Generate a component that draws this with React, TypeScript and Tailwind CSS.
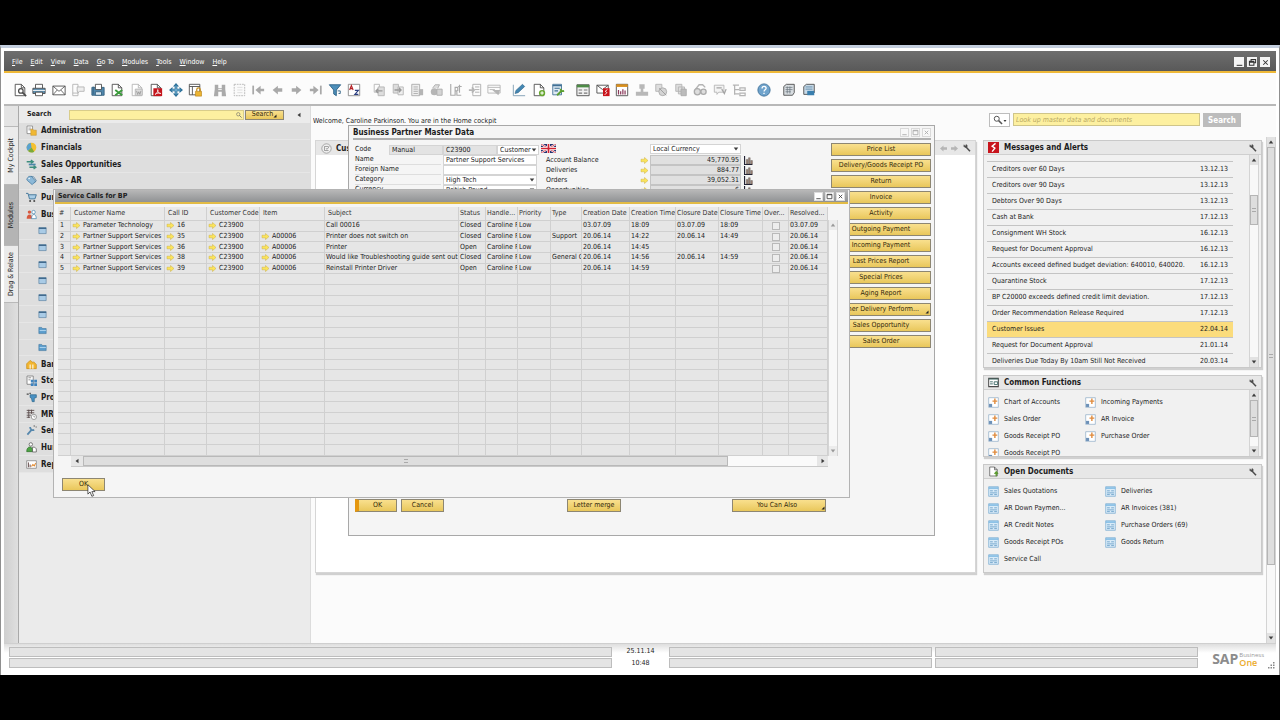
import clsx from 'clsx';
import React, { useState } from 'react';

type Glyph = { name: string; art: React.ReactNode };

const blue = '#3f83b0';
const dark = '#4a4a4a';
const dim = '#b4b4b4';

function Svg({ children, className = 'size-3.5' }: { children: React.ReactNode; className?: string }) {
  return (
    <svg viewBox="0 0 16 16" fill="none" className={clsx('shrink-0', className)} aria-hidden="true">
      {children}
    </svg>
  );
}

const page = (stroke: string, fill = '#fff') => <path d="M2.5 1.5h7l4 4v9h-11zM9.5 1.5v4h4" stroke={stroke} fill={fill} />;

const fileTools: Glyph[] = [
  { name: 'Preview', art: <>{page(dark)}<circle cx="9" cy="9" r="2.6" stroke={dark} strokeWidth="1.4" fill="#fff" /><path d="M11 11l4 4" stroke={dark} strokeWidth="1.8" /></> },
  { name: 'Print', art: <><path d="M4 6V1.5h8V6" stroke={dark} fill="#fff" /><path d="M1 6h14v6H1z" fill="#5d8fb0" stroke={dark} /><path d="M1 8.5h14" stroke="#fff" /><path d="M4 10.5h8v4H4z" fill="#fff" stroke={dark} /></> },
  { name: 'E-mail', art: <><path d="M1 3.5h14v10H1z" fill="#fff" stroke={dark} /><path d="M1 3.5l7 6 7-6M1 13.5l5-5.5M15 13.5L10 8" stroke={dark} strokeWidth=".9" /></> },
  { name: 'SMS', art: <><path d="M2 1.5h6v13H2zM2 11.5h6" stroke={dim} /><path d="M7 4.500h8v5h-5l-2 2v-2H7z" fill="#eee" stroke={dim} /></> },
  { name: 'Fax', art: <><path d="M1 5h14v9H1z" fill="#4f87ad" stroke="#35607e" /><path d="M5 1.500h7v6H5z" fill="#fff" stroke={dark} /><path d="M5 10h7v4H5zM2.500 4v9" fill="#dce9f2" stroke="#35607e" /></> },
  { name: 'Export to Excel', art: <>{page(dark)}<path d="M6 8l8 6M14 8l-8 6" stroke="#3b9b3b" strokeWidth="2.200" /></> },
  { name: 'Export to Word', art: <>{page(dim)}<path d="M6 7h8v7H6z" fill="#ddd" stroke={dim} /><path d="M7.500 9l1.200 4L10 10l1.300 3 1.200-4" stroke="#999" /></> },
  { name: 'Export to PDF', art: <>{page(dark)}<path d="M5 6h10v9H5z" fill="#c4151c" /><path d="M7 13c3-2 3.500-4 3-5.500C9.500 10 11 12 13.500 12c-2-1-4.500-.5-6.500 1z" stroke="#fff" strokeWidth=".9" /></> },
  { name: 'Launch Application', art: <><path d="M8 3v10M3 8h10" stroke="#2c7099" strokeWidth="3" /><path d="M8 0l3.500 4h-7zM8 16l3.500-4h-7zM0 8l4-3.500v7zM16 8l-4-3.500v7z" fill="#2c7099" /><path d="M8 3v10M3 8h10" stroke="#8cc4e3" /></> },
  { name: 'Lock Screen', art: <><path d="M1.500 1.500h12v12h-12zM1.500 4h12M5 4v9.500" stroke={dark} fill="#fff" /><path d="M10 9.500V7.500a2 2 0 014 0v2" stroke="#c48d1e" strokeWidth="1.400" /><path d="M8.500 9.500h7v5.500h-7z" fill="#ecb431" stroke="#b57f16" strokeWidth=".7" /></> },
];

const dataTools: Glyph[] = [
  { name: 'Find', art: <><path d="M2 2h4v4h4V2h4v5l1 8h-5v-5H6v5H1l1-8z" fill="#aaa" /><path d="M6 7.500h4" stroke="#fff" /></> },
  { name: 'Add', art: <><path d="M2.500 1.500h12v13h-12z" stroke={dim} strokeDasharray="2 1" fill="#fafafa" /><path d="M6 5h6M6 8h6M6 11h6" stroke="#ddd" /></> },
  { name: 'First Record', art: <><path d="M2.500 3v10" stroke="#a9a9a9" strokeWidth="2" /><path d="M15 6.500h-4V3L5 8l6 5V9.500h4z" fill="#a9a9a9" /></> },
  { name: 'Previous Record', art: <path d="M14 6H9V3L3 8l6 5v-3h5z" fill="#a9a9a9" /> },
  { name: 'Next Record', art: <path d="M2 6h5V3l6 5-6 5v-3H2z" fill="#a9a9a9" /> },
  { name: 'Last Record', art: <><path d="M13.500 3v10" stroke="#a9a9a9" strokeWidth="2" /><path d="M1 6.500h4V3l6 5-6 5V9.500H1z" fill="#a9a9a9" /></> },
  { name: 'Filter Table', art: <><path d="M1.500 2h13L9.500 8v6.500l-3-2V8z" fill="#4d8fba" stroke="#2a5f84" /><path d="M11 9h3v3h-2" stroke="#2a5f84" /></> },
  { name: 'Sort Table', art: <><path d="M1.500 1.500h13v13h-13z" stroke="#888" fill="#fff" /><path d="M3 8l2-5 2 5M3.700 6.500h2.600" stroke="#b52025" strokeWidth="1.300" /><path d="M9 8.500h4L9 13h4" stroke="#2b3f80" strokeWidth="1.300" /></> },
];

const docTools: Glyph[] = [
  { name: 'Base Document', art: <><path d="M2.500 1.500h6v9h-6z" stroke={dim} /><path d="M7 4.500h7v10H7z" fill="#ddd" stroke={dim} /><path d="M12 9H4M7 6.500L4.500 9 7 11.500" stroke="#999" strokeWidth="1.500" /></> },
  { name: 'Target Document', art: <><path d="M2.500 1.500h6v10h-6z" stroke={dim} fill="#ddd" /><path d="M8 4.500h6v9H8z" stroke={dim} fill="#eee" /><path d="M4 8h7M9 5.500L11.500 8 9 10.500" stroke="#999" strokeWidth="1.500" /></> },
  { name: 'Gross Profit', art: <><path d="M2 1.500h9v13H2zM4 4.500h5M4 7h5M4 9.500h5M4 12h5" stroke="#aaa" fill="#eee" /><path d="M10 7h5v7h-5z" fill="#b5b5b5" /></> },
  { name: 'Payment Means', art: <><path d="M4 6l3-4h5l-2 4" stroke="#aaa" fill="#ddd" /><circle cx="6" cy="10" r="4" fill="#b5b5b5" /><path d="M9 7h6v7H9z" fill="#d4d4d4" stroke="#aaa" /></> },
  { name: 'Volume and Weight', art: <path d="M2 1v13h5V9h2v5h5M7 9V5h3v4M12 2v9M10.500 4h4" stroke="#aaa" strokeWidth="1.300" /> },
  { name: 'Transaction Journal', art: <><path d="M5.500 1.500h9v13h-9zM8 4.500h5M8 7.500h5M8 10.500h5" stroke="#aaa" /><path d="M1 8h6M4.500 5L7 8l-2.500 3" stroke="#b5b5b5" strokeWidth="2" /></> },
  { name: 'Layout Designer', art: <><path d="M1 2.500h14v9H1zM1 5h14M3 7.500h6" stroke={dim} /><path d="M6 8l7 6 2-6z" fill="#b5b5b5" /></> },
];

const editTools: Glyph[] = [
  { name: 'Edit', art: <><path d="M1.500 2v12.500H15" stroke="#7a9ab0" /><path d="M3.500 12l1-3.500L12 1.500 14.500 4 7 11z" fill="#4487b3" stroke="#2d6388" strokeWidth=".7" /></> },
  { name: 'New Activity', art: <>{page(dark)}<circle cx="11.500" cy="11.500" r="3.600" fill="#67a82f" /><path d="M11.500 9.500v4M9.500 11.500h4" stroke="#fff" strokeWidth="1.200" /></> },
  { name: 'Form Settings', art: <><path d="M2 1.500h10v12H2z" fill="#dfeaf3" stroke="#3f6f95" /><path d="M2 3h10M4 6h6M4 9h4" stroke="#3f6f95" strokeWidth="1.400" /><path d="M7 14l5-5M11 6.500c0 3 2 3 4 2.500" stroke="#5a9f2e" strokeWidth="2.200" /></> },
];

const reportTools: Glyph[] = [
  { name: 'Query Manager', art: <><path d="M1 2h14v12.500H1z" fill="#f2f2f2" stroke={dark} /><path d="M1 3.500h14" stroke="#4d8b46" strokeWidth="3" /><path d="M3 8h4M9 8h4M3 11.500h4M9 11.500h4" stroke="#777" strokeWidth="1.300" /></> },
  { name: 'Messages', art: <><path d="M1 2.500h13v9H1zM1 2.500l6.500 5 6.500-5" stroke={dark} fill="#fff" /><path d="M8 6h7.500v9H8z" fill="#c9141b" /><path d="M13 7.500l-2.500 2 2 1.500-2.500 2.500" stroke="#fff" /></> },
  { name: 'Calendar', art: <><path d="M1.500 1.500h13v13h-13z" fill="#fff" stroke={dark} /><path d="M1.500 3h13" stroke="#d98f1d" strokeWidth="3" /><path d="M4 13V8M6.500 13V9.500M9 13V7M11.500 13V8.500" stroke="#8b3a5b" strokeWidth="1.400" /></> },
  { name: 'Org Chart', art: <path d="M5 1.500h6v5H9.500V10H15v4.500H1V10h5.500V6.500H5z" fill="#b8b8b8" /> },
  { name: 'Copy', art: <><path d="M2 1.500h7v8H2z" fill="#ddd" stroke={dim} /><circle cx="10" cy="10" r="4.500" fill="#d4d4d4" stroke="#aaa" /><path d="M6 6l8 8" stroke="#999" /></> },
  { name: 'Paste', art: <><path d="M2 1.500h7v8H2zM5 4.500h7v8H5z" fill="#ddd" stroke={dim} /><path d="M8 7h6v7.500H8z" fill="#bbb" stroke="#aaa" /></> },
  { name: 'Find Again', art: <><path d="M3 7l4-5h4l3 3" stroke={dim} strokeWidth="1.600" /><circle cx="5" cy="10" r="3.500" stroke="#aaa" strokeWidth="1.500" fill="#ddd" /><circle cx="12" cy="10" r="3" stroke="#aaa" strokeWidth="1.500" fill="#ddd" /></> },
  { name: 'Alerts', art: <><path d="M1.500 2.500h11v8h-6l-2 2.500v-2.500h-3z" stroke={dim} fill="#f3f3f3" /><path d="M4 5.500h6M10 7l3 5 2-5" stroke="#a5a5a5" strokeWidth="1.500" /></> },
  { name: 'Structure', art: <path d="M1 2.500h7M3 2.500v11M3 7.500h5M9 5.500h6v3H9zM3 12.500h5M9 11.500h6v3H9z" stroke={dim} strokeWidth="1.400" /> },
];

const helpTools: Glyph[] = [
  { name: 'Help', art: <><circle cx="8" cy="8" r="7" fill="#6fa3cc" stroke="#3b6f98" /><path d="M5.800 6.200c0-3 4.600-3 4.600-.2 0 1.800-2.300 1.700-2.300 3.700M8 11v1.600" stroke="#fff" strokeWidth="1.500" /></> },
];

const addonTools: Glyph[] = [
  { name: 'Keyboard', art: <><path d="M2 4l3-2.500h9V11l-2 3H2z" fill="#d8dde1" stroke={dark} /><path d="M4 5h8M4 7.500h8M4 10h6M6 4v8M9 4v8" stroke="#68737c" strokeWidth=".8" /></> },
  { name: 'Workbench', art: <><path d="M2 4l3-2.500h9V11l-2 2H2z" fill="#c8dae8" stroke={dark} /><path d="M4 4.500h8M4 7h8" stroke="#5d87a6" /><path d="M6 9h8v5H6z" fill="#397fae" /></> },
];

function ToolGroup({ glyphs, className }: { glyphs: Glyph[]; className?: string }) {
  return (
    <div className={clsx('flex items-center justify-between', className)}>
      {glyphs.map((g) => (
        <button key={g.name} type="button" title={g.name} aria-label={g.name}>
          <Svg>{g.art}</Svg>
        </button>
      ))}
    </div>
  );
}

const menus = ['File', 'Edit', 'View', 'Data', 'Go To', 'Modules', 'Tools', 'Window', 'Help'];

const windowIcon = (
  <>
    <path d="M1.500 3h13v10.500h-13z" fill="#a9cbe6" stroke="#4a7396" />
    <path d="M1.500 4h13" stroke="#3a6387" strokeWidth="2.400" />
  </>
);
const folderIcon = (
  <>
    <path d="M1.500 13.500v-11h5l1.500 2h6.500v9z" fill="#5a9ccc" stroke="#3f749c" />
    <path d="M3 8h11" stroke="#a8d0ec" strokeWidth="2" />
  </>
);

type ModuleRow = { label?: string; art: React.ReactNode };

const modules: ModuleRow[] = [
  { label: 'Administration', art: <><path d="M1.500 1.500h8v11h-8zM3.500 4.500h4M3.500 7h4" stroke="#777" fill="#fff" /><path d="M7 6h3l1 1.500h4V15H7z" fill="#f0b833" stroke="#c48d1e" strokeWidth=".7" /></> },
  { label: 'Financials', art: <><circle cx="8" cy="8" r="7" fill="#f4c02f" /><path d="M8 8L7 1a7 7 0 00-4 12z" fill="#5aa2cf" /><path d="M8 8l-5 5a7 7 0 009 1z" fill="#7aaa3a" /></> },
  { label: 'Sales Opportunities', art: <><path d="M1 4h9M7 1.500L10.500 4 7 6.500M5 12h9M11 9.500l3.500 2.500-3.500 2.500" stroke="#3d8d7d" strokeWidth="2" /><path d="M4 8h10" stroke="#4c86a8" strokeWidth="2.500" /></> },
  { label: 'Sales - AR', art: <><path d="M1 6l3-4h4l6 7-5 5-7-6z" fill="#8db9d8" stroke="#3e759c" /><path d="M7 2l4 .5 4 5.500-3 4" stroke="#3e759c" /><circle cx="4.500" cy="5" r="1" fill="#fff" /></> },
  { label: 'Purchasing', art: <><path d="M0 2h3l2 8h8l2-6H4" fill="#a9cde6" stroke="#3f7396" strokeWidth="1.300" /><circle cx="6" cy="13" r="1.500" fill={dark} /><circle cx="12" cy="13" r="1.500" fill={dark} /></> },
  { label: 'Business', art: <><circle cx="5" cy="4.500" r="2.500" fill="#d7593f" /><path d="M1 14c0-8 8-8 8 0z" fill="#d7593f" /><circle cx="11" cy="4.500" r="2.500" fill="#fff" stroke={blue} /><path d="M8 14c0-8 7-8 7 0z" fill="#fff" stroke={blue} /></> },
  { art: windowIcon },
  { art: windowIcon },
  { art: windowIcon },
  { art: windowIcon },
  { art: windowIcon },
  { art: windowIcon },
  { art: folderIcon },
  { art: folderIcon },
  { label: 'Banking', art: <><path d="M1 7l5-5 4 3 1-1 4 4v6H1z" fill="#f2b631" stroke="#c98a12" /><path d="M6 14V8M10 14V8" stroke="#fff" strokeWidth="1.500" /></> },
  { label: 'Stock', art: <><path d="M1.500 1.500h9v12h-9zM3.500 4h4M3.500 7h3" stroke="#666" fill="#fff" /><path d="M7 7h4v4H7zM12 7h4v4h-4zM7 12h4v4H7zM12 12h4v4h-4z" fill="#3f83bd" /></> },
  { label: 'Production', art: <><path d="M1 3h3M5 2h2" stroke={dark} strokeWidth="2" /><path d="M6 4h9v4l-3 1v5H9L8 9 6 8z" fill="#4a92c4" stroke="#2d6488" /></> },
  { label: 'MRP', art: <><path d="M1 2h11M1 5.500h11M1 9h6M1 12h5M4 1v12M8 1v6" stroke="#5b4c4c" strokeWidth="1.300" /><circle cx="11.500" cy="11.500" r="3.800" fill="#fff" stroke="#777" /><path d="M11.500 9.500v2h2" stroke="#777" /></> },
  { label: 'Service', art: <><path d="M2 14l7-8M6 3c0 4 3 5 6 4" stroke="#5788ad" strokeWidth="2.600" /><path d="M11 1.500h2M14 3h1.500" stroke="#555" strokeWidth="1.500" /></> },
  { label: 'Human', art: <><circle cx="7" cy="3.500" r="2.500" fill="#fff" stroke={dark} /><path d="M1 14c0-9 9-9 9 0z" fill="#4da344" stroke="#2d6f28" /><path d="M9.500 7.500h3l2.500 2.500v4.500H9.500z" fill="#fff" stroke={dark} /></> },
  { label: 'Reports', art: <><path d="M1 2.500h14v11H1z" fill="#fff" stroke="#777" /><path d="M3.500 12V5M6 12V8" stroke="#5a3d3d" strokeWidth="1.300" /><path d="M8 11l2-3 2 2 2-4" stroke="#e3892d" strokeWidth="1.600" /></> },
];

const messages = [
  ["New Customer's Orders", '17.12.13'],
  ['Creditors over 60 Days', '13.12.13'],
  ['Creditors over 90 Days', '13.12.13'],
  ['Debtors Over 90 Days', '13.12.13'],
  ['Cash at Bank', '17.12.13'],
  ['Consignment WH Stock', '16.12.13'],
  ['Request for Document Approval', '16.12.13'],
  ['Accounts exceed defined budget deviation: 640010, 640020.', '16.12.13'],
  ['Quarantine Stock', '17.12.13'],
  ['BP C20000 exceeds defined credit limit deviation.', '17.12.13'],
  ['Order Recommendation Release Required', '17.12.13'],
  ['Customer Issues', '22.04.14'],
  ['Request for Document Approval', '21.01.14'],
  ['Deliveries Due Today By 10am Still Not Received', '20.03.14'],
];

const commonFunctions = ['Chart of Accounts', 'Incoming Payments', 'Sales Order', 'AR Invoice', 'Goods Receipt PO', 'Purchase Order', 'Goods Receipt PO'];

const openDocuments = [
  'Sales Quotations',
  'Deliveries',
  'AR Down Paymen...',
  'AR Invoices (381)',
  'AR Credit Notes',
  'Purchase Orders (69)',
  'Goods Receipt POs',
  'Goods Return',
  'Service Call',
];

const partnerActions = [
  'Price List',
  'Delivery/Goods Receipt PO',
  'Return',
  'Invoice',
  'Activity',
  'Outgoing Payment',
  'Incoming Payment',
  'Last Prices Report',
  'Special Prices',
  'Aging Report',
  'Customer Delivery Perform...',
  'Sales Opportunity',
  'Sales Order',
];

const columns = [
  { title: '#', width: 'w-[13px]' },
  { title: 'Customer Name', width: 'w-[94px]' },
  { title: 'Call ID', width: 'w-[42px]' },
  { title: 'Customer Code', width: 'w-[53px]' },
  { title: 'Item', width: 'w-[65px]' },
  { title: 'Subject', width: 'w-[134px]' },
  { title: 'Status', width: 'w-[27px]' },
  { title: 'Handle...', width: 'w-[32px]' },
  { title: 'Priority', width: 'w-[33px]' },
  { title: 'Type', width: 'w-[31px]' },
  { title: 'Creation Date', width: 'w-[48px]' },
  { title: 'Creation Time', width: 'w-[46px]' },
  { title: 'Closure Date', width: 'w-[43px]' },
  { title: 'Closure Time', width: 'w-[44px]' },
  { title: 'Over...', width: 'w-[26px]' },
  { title: 'Resolved...', width: 'w-[39px]' },
];

const OVERDUE = 14;
const linked = [1, 2, 3, 4];

const calls = [
  ['1', 'Parameter Technology', '16', 'C23900', '', 'Call 00016', 'Closed', 'Caroline P', 'Low', '', '03.07.09', '18:09', '03.07.09', '18:09', '', '03.07.09'],
  ['2', 'Partner Support Services', '35', 'C23900', 'A00006', 'Printer does not switch on', 'Closed', 'Caroline P', 'Low', 'Support', '20.06.14', '14:22', '20.06.14', '14:49', '', '20.06.14'],
  ['3', 'Partner Support Services', '36', 'C23900', 'A00006', 'Printer', 'Open', 'Caroline P', 'Low', '', '20.06.14', '14:45', '', '', '', '20.06.14'],
  ['4', 'Partner Support Services', '38', 'C23900', 'A00006', 'Would like Troubleshooting guide sent out', 'Closed', 'Caroline P', 'Low', 'General Q', '20.06.14', '14:56', '20.06.14', '14:59', '', '20.06.14'],
  ['5', 'Partner Support Services', '39', 'C23900', 'A00006', 'Reinstall Printer Driver', 'Open', 'Caroline P', 'Low', '', '20.06.14', '14:59', '', '', '', '20.06.14'],
];
const emptyRows = Array.from({ length: 17 });

function LinkArrow() {
  return (
    <Svg className="h-[7px] w-[9px]">
      <path d="M0 5h8V1l8 7-8 7v-4H0z" fill="#fbe45a" stroke="#c9ab3c" />
    </Svg>
  );
}

function Wrench({ className = 'size-2' }: { className?: string }) {
  return (
    <Svg className={className}>
      <path d="M6 6l8 8.500" stroke="#4c4c4c" strokeWidth="3" />
      <path d="M2 1.500l-.5 3L4 7l4-.5L8.500 3 6 1l-.5 3L4 4z" fill="#4c4c4c" stroke="#4c4c4c" />
    </Svg>
  );
}

function Triangle({ dir, className }: { dir: 'up' | 'down' | 'left' | 'right'; className?: string }) {
  const d = {
    up: 'M2 12l6-8 6 8z',
    down: 'M2 4l6 8 6-8z',
    left: 'M12 2L4 8l8 6z',
    right: 'M4 2l8 6-8 6z',
  }[dir];
  return (
    <Svg className={className ?? 'size-1.5'}>
      <path d={d} fill="#3c3c3c" />
    </Svg>
  );
}

function VScroll({ lead, thumb, className, muted }: { lead?: string; thumb?: string; className?: string; muted?: boolean }) {
  return (
    <div className={clsx('flex w-[10px] shrink-0 flex-col border-x border-[#d4d4d4] bg-[#f8f8f8]', className)}>
      <button type="button" aria-label="Scroll up" className={clsx('flex h-[10px] items-center justify-center bg-[#e2e2e2]', muted && 'opacity-50')}>
        <Triangle dir="up" />
      </button>
      <div className="flex min-h-0 flex-1 flex-col">
        {lead && <div className={lead} />}
        {thumb && <div className={clsx('flex items-center justify-center border border-[#b5b5b5] bg-[#dedede]', thumb)}>
          <span className="h-1 w-1 border-y border-[#aaa]" />
        </div>}
      </div>
      <button type="button" aria-label="Scroll down" className={clsx('flex h-[10px] items-center justify-center bg-[#e2e2e2]', muted && 'opacity-50')}>
        <Triangle dir="down" />
      </button>
    </div>
  );
}

function GoldButton({ children, className }: { children: React.ReactNode; className?: string }) {
  return (
    <button
      type="button"
      className={clsx(
        'flex items-center justify-center overflow-hidden whitespace-nowrap border border-[#8d8672] bg-linear-to-b from-[#f9e08e] to-[#e9c75a] text-[#33280a]',
        className ?? 'h-[13px]'
      )}
    >
      {children}
    </button>
  );
}

function Corner() {
  return (
    <Svg className="mb-px size-1 self-end">
      <path d="M14 2v12H2z" fill="#222" />
    </Svg>
  );
}

function WindowButtons({ faded, className }: { faded?: boolean; className?: string }) {
  const paths = ['M3 13h10', 'M2.500 3h11v10h-11zM2.500 4h11', 'M4 4l8 8M12 4l-8 8'];
  return (
    <div className={clsx('flex', className)}>
      {['Minimise', 'Restore', 'Close'].map((n, i) => (
        <button
          key={n}
          type="button"
          aria-label={n}
          className={clsx('flex size-[9px] items-center justify-center border', faded ? 'border-[#d9d9d9] bg-[#f8f8f8]' : 'border-[#dcdcdc] bg-white')}
        >
          <Svg className="size-[7px]">
            <path d={paths[i]} stroke={faded ? '#aaa' : '#444'} strokeWidth="2" />
          </Svg>
        </button>
      ))}
    </div>
  );
}

function MenuBar() {
  const wide = ['M3 13h10', 'M5.500 5.500V2.500h8v6h-3M2.500 6h8v7h-8zM2.500 7.500h8', 'M4 4l8 8M12 4l-8 8'];
  return (
    <header className="flex h-[22px] shrink-0 items-center justify-between border-b-2 border-[#efb938] bg-linear-to-b from-[#6e6e6e] to-[#595959] pt-[2px] pr-1.5 pl-2">
      <nav className="flex gap-2 text-[7px] text-white">
        {menus.map((m) => (
          <button key={m} type="button">
            <span className="underline">{m[0]}</span>
            {m.slice(1)}
          </button>
        ))}
      </nav>
      <div className="flex gap-[3px]">
        {wide.map((d) => (
          <button key={d} type="button" aria-label="Window control" className="flex size-[10px] items-center justify-center bg-[#f4f4f4]">
            <Svg className="size-[9px]">
              <path d={d} stroke="#333" strokeWidth="1.800" />
            </Svg>
          </button>
        ))}
      </div>
    </header>
  );
}

function SideTabs() {
  const tab = 'flex items-center justify-center border-b border-[#b9b9b9] [writing-mode:vertical-rl]';
  return (
    <div className="flex w-[15px] shrink-0 flex-col border-r border-[#a9a9a9] bg-linear-to-r from-[#cfcfcf] to-[#dfdfdf]">
      <div className="h-[21px] border-b border-[#b9b9b9] bg-[#e4e4e4]" />
      <button type="button" className={clsx(tab, 'h-[58px] bg-[#ebebeb]')}>
        <span className="rotate-180">My Cockpit</span>
      </button>
      <button type="button" className={clsx(tab, 'h-[61px] bg-[#b4b4b4]')}>
        <span className="rotate-180">Modules</span>
      </button>
      <button type="button" className={clsx(tab, 'h-[57px] bg-[#ebebeb]')}>
        <span className="rotate-180">Drag &amp; Relate</span>
      </button>
    </div>
  );
}

function Sidebar() {
  return (
    <aside className="w-[292px] shrink-0 border-r border-[#dcdcdc] bg-[#ebebeb]">
      <div className="flex h-[17px] items-center pl-2">
        <label htmlFor="menu-search" className="w-[42px] text-[7px] font-bold">
          Search
        </label>
        <div className="flex h-[10px] w-[175px] items-center border border-[#d9cd8a] bg-[#fdf0a0]">
          <input id="menu-search" className="min-w-0 flex-1 bg-transparent outline-none" />
          <Svg className="mr-px size-1.5">
            <circle cx="6" cy="6" r="4.500" stroke="#666" strokeWidth="1.500" />
            <path d="M9 9l6 6" stroke="#666" strokeWidth="2" />
          </Svg>
        </div>
        <GoldButton className="ml-px h-[10px] w-[39px] justify-between px-1">
          <span>Search</span>
          <Corner />
        </GoldButton>
        <button type="button" aria-label="Collapse" className="ml-3">
          <Triangle dir="left" />
        </button>
      </div>
      <ul className="grid h-[350px] auto-rows-fr">
        {modules.map((m, i) => (
          <li key={i} className={clsx('flex items-center border-b border-[#e6e6e6] bg-[#dedede]', m.label ? 'pl-[7px]' : 'pl-[19px]')}>
            <Svg className={m.label ? 'size-[11px]' : 'size-[9px]'}>{m.art}</Svg>
            {m.label && (
              <button type="button" className="ml-1 text-[8px] font-bold">
                {m.label}
              </button>
            )}
          </li>
        ))}
      </ul>
    </aside>
  );
}

function Panel({ title, icon, children, className }: { title: string; icon: React.ReactNode; children: React.ReactNode; className?: string }) {
  return (
    <section className={clsx('flex flex-col border border-[#c9c9c9] bg-[#f1f1f1] shadow-[1px_2px_1px_#d0d0d0]', className)}>
      <h2 className="flex h-[14px] shrink-0 items-center border-b border-[#cfcfcf] bg-[#e7e7e7] px-1 text-[8px] font-bold">
        {icon}
        <span className="ml-[5px] flex-1">{title}</span>
        <Wrench />
      </h2>
      {children}
    </section>
  );
}

function Messages() {
  const [current, setCurrent] = useState(11);
  return (
    <Panel
      title="Messages and Alerts"
      className="h-[228px]"
      icon={
        <Svg className="size-[11px]">
          <path d="M0 0h16v16H0z" fill="#c8141c" />
          <path d="M11 2L6 6l4 3-4 5" stroke="#fff" strokeWidth="2" />
        </Svg>
      }
    >
      <div className="flex min-h-0 flex-1 pr-0.5 pl-[3px]">
        <ul className="flex-1 overflow-hidden">
          {messages.map(([text, date], i) => (
            <li key={i} className="first:-mt-[9px]">
              <button
                type="button"
                onClick={() => setCurrent(i)}
                className={clsx('flex h-4 w-full items-center justify-between border-b border-[#c4c4c4] pr-[5px] pl-[5px] text-left', current === i && 'bg-[#fbdc7c]')}
              >
                <span>{text}</span>
                <span>{date}</span>
              </button>
            </li>
          ))}
        </ul>
        <VScroll className="ml-4" lead="h-[30px]" thumb="h-[30px]" />
      </div>
    </Panel>
  );
}

function CommonFunctions() {
  return (
    <Panel
      title="Common Functions"
      className="h-[82px]"
      icon={
        <Svg className="size-[11px]">
          <path d="M1 2h14v12H1z" fill="#fff" stroke={dark} strokeWidth="1.500" />
          <path d="M1 3h14M3 7h4M3 10h4M9 7h5v4H9z" stroke="#47706d" strokeWidth="1.400" />
        </Svg>
      }
    >
      <div className="flex min-h-0 flex-1 pr-0.5 pl-1">
        <ul className="grid flex-1 auto-rows-[17px] grid-cols-[97px_1fr] content-start overflow-hidden pt-1">
          {commonFunctions.map((f, i) => (
            <li key={i} className="flex items-center gap-[5px]">
              <Svg className="size-[11px]">
                <path d="M1 1h14v14H1z" fill="#fff" stroke="#8aa9c4" />
                <path d="M10 2v8M6.500 6h7" stroke="#e08a3c" strokeWidth="2" />
                <path d="M1.500 10h4.500v4.500H1.500z" fill="#6d91b8" />
              </Svg>
              <a href="#">{f}</a>
            </li>
          ))}
        </ul>
        <VScroll thumb="h-[37px]" />
      </div>
    </Panel>
  );
}

function OpenDocuments() {
  return (
    <Panel
      title="Open Documents"
      className="h-[110px]"
      icon={
        <Svg className="size-[11px]">
          {page(dark)}
          <path d="M12 15V9M9.500 11.500L12 8.500l2.500 3" stroke="#5b9b2f" strokeWidth="2" />
        </Svg>
      }
    >
      <ul className="grid flex-1 grid-cols-[117px_1fr] auto-rows-fr pt-1 pb-1 pl-1">
        {openDocuments.map((d) => (
          <li key={d} className="flex items-center gap-[5px]">
            <Svg className="size-[11px]">
              <path d="M1 1h14v14H1z" fill="#d8ebf8" stroke="#76a9cf" />
              <path d="M1 3h14" stroke="#76b5e0" strokeWidth="2" />
              <path d="M3 7h4M9 7h4M3 10h10M3 12.500h4M9 12.500h4" stroke="#4f8cba" />
            </Svg>
            <a href="#">{d}</a>
          </li>
        ))}
      </ul>
    </Panel>
  );
}

function Desktop() {
  return (
    <main className="flex min-w-0 flex-1 flex-col bg-[#fbfbfb] pl-[4px]">
      <div className="flex h-[34px] shrink-0 justify-between pr-[35px]">
        <p className="-ml-[2px] w-[190px] overflow-hidden pt-[11px] whitespace-nowrap">Welcome, Caroline Parkinson. You are in the Home cockpit</p>
        <div className="mt-[7px] flex h-[14px] gap-[3px]">
          <button type="button" aria-label="Search type" className="flex w-[21px] items-center justify-center border border-[#bdbdbd] bg-white">
            <Svg className="size-2.5">
              <circle cx="6" cy="6" r="4" stroke="#555" strokeWidth="1.600" />
              <path d="M9 9l5.500 5.500" stroke="#555" strokeWidth="2.400" />
            </Svg>
            <Triangle dir="down" className="mb-[3px] size-1 self-end" />
          </button>
          <input
            aria-label="Look up master data and documents"
            placeholder="Look up master data and documents"
            className="h-[13px] w-[187px] border border-[#cfc58a] bg-[#fdf0a0] px-[2px] italic placeholder:text-[#b9a964]"
          />
          <button type="button" className="w-[38px] bg-[#bcbcbc] text-[8px] font-bold text-white">
            Search
          </button>
        </div>
      </div>
      <div className="flex min-h-0 flex-1 gap-[4px]">
        <div className="flex h-[433px] flex-1 gap-[7px]">
          <section className="flex-1 border border-[#d6d6d6] bg-white shadow-[1px_2px_1px_#d0d0d0]">
            <h2 className="flex h-[14px] items-center bg-[#e7e7e7] pr-1 pl-[5px] text-[8px] font-bold">
              <Svg className="size-[11px]">
                <circle cx="8" cy="8" r="6.800" stroke="#888" fill="#f3f3f3" />
                <path d="M5 5h6M5 5v6h6M7 8l2 1 3-4" stroke="#777" />
              </Svg>
              <span className="ml-1 flex-1">Customer</span>
              <Svg className="mr-1 size-[7px]">
                <path d="M16 5H8V1L0 8l8 7v-4h8z" fill="#b5b5b5" />
              </Svg>
              <Svg className="mr-[5px] size-[7px]">
                <path d="M0 5h8V1l8 7-8 7v-4H0z" fill="#b5b5b5" />
              </Svg>
              <Wrench />
            </h2>
          </section>
          <div className="flex w-[279px] flex-col gap-[7px]">
            <Messages />
            <CommonFunctions />
            <OpenDocuments />
          </div>
        </div>
        <VScroll className="-mt-[3px]" thumb="h-[418px]" />
      </div>
    </main>
  );
}

const fieldBox = 'h-[10px] min-w-0 border border-[#d4d4d4] px-[2px] outline-none';

function Dropdown({ label, value, className }: { label: string; value: string; className?: string }) {
  return (
    <span className={clsx('relative flex', className)}>
      <select aria-label={label} defaultValue={value} className={clsx(fieldBox, 'flex-1 appearance-none bg-white')}>
        <option>{value}</option>
      </select>
      <Triangle dir="down" className="pointer-events-none absolute top-[2px] right-[2px] size-1.5" />
    </span>
  );
}

function PartnerWindow() {
  const label = 'w-[86px] border-b border-[#dedede]';
  const balances = [
    ['Account Balance', '45,770.95'],
    ['Deliveries', '884.77'],
    ['Orders', '39,052.31'],
    ['Opportunities', '6'],
  ];
  return (
    <section className="absolute top-[77px] left-[347px] flex h-[411px] w-[587px] flex-col border border-[#a8a8a8] bg-[#f5f5f5] pr-[3px] pl-1">
      <h2 className="flex h-[14px] shrink-0 items-center justify-between border-b-2 border-[#b0b0b0] pt-px text-[8px] font-bold">
        Business Partner Master Data
        <WindowButtons faded className="gap-[2px]" />
      </h2>
      <div className="flex flex-1 pt-[3px] pl-[2px]">
        <div className="flex w-[184px] flex-col pt-px">
          <div className="flex h-[11px] items-center">
            <label htmlFor="bp-code" className="w-[34px]">Code</label>
            <input aria-label="Numbering" defaultValue="Manual" className={clsx(fieldBox, 'w-[54px] bg-[#e3e3e3]')} />
            <input id="bp-code" defaultValue="C23900" className={clsx(fieldBox, 'w-[54px] bg-[#e3e3e3]')} />
            <Dropdown label="Partner type" value="Customer" className="w-[42px]" />
          </div>
          <div className="flex h-[10px] items-center">
            <label htmlFor="bp-name" className={label}>Name</label>
            <input id="bp-name" defaultValue="Partner Support Services" className={clsx(fieldBox, 'ml-[2px] w-[94px] bg-white')} />
          </div>
          <div className="flex h-[10px] items-center">
            <label htmlFor="bp-foreign" className={label}>Foreign Name</label>
            <input id="bp-foreign" className={clsx(fieldBox, 'ml-[2px] w-[94px] bg-white')} />
          </div>
          <div className="flex h-[10px] items-center">
            <span className={label}>Category</span>
            <Dropdown label="Category" value="High Tech" className="ml-[2px] w-[94px]" />
          </div>
          <div className="flex h-[10px] items-center">
            <span className={label}>Currency</span>
            <Dropdown label="Currency" value="British Pound" className="ml-[2px] w-[94px]" />
          </div>
        </div>
        <svg viewBox="0 0 30 18" className="mt-px ml-[2px] h-[9px] w-[15px] shrink-0" aria-hidden="true">
          <path d="M0 0h30v18H0z" fill="#26306f" />
          <path d="M0 0l30 18M30 0L0 18" stroke="#fff" strokeWidth="4" />
          <path d="M0 0l30 18M30 0L0 18" stroke="#cf2233" strokeWidth="1.500" />
          <path d="M15 0v18M0 9h30" stroke="#fff" strokeWidth="6" />
          <path d="M15 0v18M0 9h30" stroke="#cf2233" strokeWidth="3.400" />
        </svg>
        <div className="-ml-[10px] w-[207px]">
          <div className="flex h-[12px] items-center justify-end pr-[12px]">
            <Dropdown label="Balance currency" value="Local Currency" className="w-[91px]" />
          </div>
          {balances.map(([name, value]) => (
            <div key={name} className="flex h-[10px] items-center">
              <span className="w-[94px]">{name}</span>
              <LinkArrow />
              <output className="ml-[1px] h-[10px] w-[91px] border border-[#c4c4c4] bg-[#e0e0e0] pr-px text-right">{value}</output>
              <Svg className="ml-[3px] size-[9px]">
                <path d="M1 0v15h14" stroke="#223" strokeWidth="2" />
                <path d="M4 6h3v8H4zM8 3h3v11H8zM12 8h3v6h-3z" fill="#a08578" stroke="#444" strokeWidth=".6" />
              </Svg>
            </div>
          ))}
        </div>
        <div className="ml-auto flex w-[100px] flex-col gap-[3px]">
          {partnerActions.map((a) =>
            a.startsWith('Customer') ? (
              <GoldButton key={a} className="h-[13px] justify-end pr-px">
                <span className="mr-1">{a}</span>
                <span className="mr-[2px] h-full w-px bg-[#b39a4a]" />
                <Corner />
              </GoldButton>
            ) : (
              <GoldButton key={a}>{a}</GoldButton>
            )
          )}
        </div>
      </div>
      <div className="mb-[23px] flex pl-[2px]">
        <GoldButton className="h-[13px] w-[42px] border-l-4 border-l-[#e5970f]">OK</GoldButton>
        <GoldButton className="ml-1 h-[13px] w-[43px]">Cancel</GoldButton>
        <GoldButton className="ml-[123px] h-[13px] w-[54px]">Letter merge</GoldButton>
        <GoldButton className="mr-[105px] ml-auto h-[13px] w-[94px]">
          <span className="flex-1">You Can Also</span>
          <Corner />
        </GoldButton>
      </div>
    </section>
  );
}

function ServiceCallsWindow() {
  const cell = 'overflow-hidden whitespace-nowrap border-r border-b border-[#d0d0d0] p-0 text-left font-normal';
  return (
    <section className="absolute top-[141px] left-[52px] w-[797px] border border-[#b3b3b3] bg-[#f5f5f5]">
      <h2 className="mx-px flex h-[14px] items-center justify-between border-b-2 border-[#e2bb45] bg-linear-to-b from-[#b8b8b8] to-[#909294] px-[3px] text-[7px] font-bold">
        Service Calls for BP
        <WindowButtons className="gap-[2px]" />
      </h2>
      <div className="mt-[3px] flex pl-1">
        <table className="h-[249px] w-[770px] table-fixed border-separate border-spacing-0 bg-[#e6e6e6]">
          <colgroup>
            {columns.map((c) => (
              <col key={c.title} className={c.width} />
            ))}
          </colgroup>
          <thead>
            <tr className="h-[14px]">
              {columns.map((c, i) => (
                <th key={c.title} scope="col" className={clsx(cell, 'bg-[#e9e9e9] text-[#333]', i > 0 && i < 6 ? 'pl-[3px]' : 'pl-px')}>
                  {c.title}
                </th>
              ))}
            </tr>
          </thead>
          <tbody>
            {calls.map((row) => (
              <tr key={row[0]} className="h-[10px]">
                {row.map((v, i) => (
                  <td key={i} className={clsx(cell, i === 0 ? 'pl-[2px]' : 'pl-px')}>
                    {i === OVERDUE ? (
                      <input type="checkbox" aria-label={'Overdue call ' + row[0]} className="mx-auto block size-2 appearance-none border border-[#b9b9b9] bg-[#ededed]" />
                    ) : linked.includes(i) && v ? (
                      <span className="flex items-center gap-[2px]">
                        <LinkArrow />
                        {v}
                      </span>
                    ) : (
                      v
                    )}
                  </td>
                ))}
              </tr>
            ))}
            {emptyRows.map((_, r) => (
              <tr key={r} className="h-[10px]">
                {columns.map((c) => (
                  <td key={c.title} className={cell} />
                ))}
              </tr>
            ))}
          </tbody>
        </table>
        <VScroll muted className="mt-[13px]" />
      </div>
      <div className="ml-[17px] flex h-[11px] w-[757px] border-b border-[#c9c9c9] bg-[#fafafa]">
        <button type="button" aria-label="Scroll left" className="flex w-[12px] items-center justify-center bg-[#e6e6e6]">
          <Triangle dir="left" />
        </button>
        <div className="flex w-[645px] items-center justify-center border border-[#b9b9b9] bg-[#dedede]">
          <span className="h-1 w-1 border-y border-[#aaa]" />
        </div>
        <button type="button" aria-label="Scroll right" className="ml-auto flex w-[11px] items-center justify-center bg-[#e6e6e6]">
          <Triangle dir="right" />
        </button>
      </div>
      <div className="pt-[11px] pb-[6px] pl-2">
        <GoldButton className="h-[13px] w-[43px]">OK</GoldButton>
      </div>
    </section>
  );
}

function StatusBar() {
  const bar = 'h-[10px] border border-[#bdbdbd] bg-[#e4e4e4]';
  return (
    <footer className="flex h-[31px] shrink-0 border-t border-[#cfcfcf] bg-linear-to-b from-[#dedede] to-white to-30% pt-[3px] pr-px pl-[5px]">
      <div className="flex flex-[602] flex-col gap-px">
        <div className={bar} />
        <div className={bar} />
      </div>
      <div className="flex w-[57px] flex-col items-center gap-[3px]">
        <span>25.11.14</span>
        <span>10:48</span>
      </div>
      <div className="grid flex-[528] grid-cols-2 content-start gap-x-[3px] gap-y-px">
        <div className={bar} />
        <div className={bar} />
        <div className={bar} />
        <div className={bar} />
      </div>
      <div className="flex w-[69px] items-center justify-end gap-px pr-[3px] pb-1">
        <span className="font-['Open_Sans',sans-serif] text-[14px] font-bold text-[#8c8c8c]">SAP</span>
        <span className="flex flex-col font-['Open_Sans',sans-serif] leading-[7px]">
          <span className="text-[6px] text-[#999]">Business</span>
          <span className="text-[9px] font-semibold text-[#ecac2c]">One</span>
        </span>
      </div>
      <Svg className="mb-[5px] size-2 self-end">
        <path d="M12 2h3v3h-3zM7 7h3v3H7zM12 7h3v3h-3zM2 12h3v3H2zM7 12h3v3H7zM12 12h3v3h-3z" fill="#888" />
      </Svg>
    </footer>
  );
}

export default function App() {
  return (
    <div className="h-screen bg-black py-[45px] font-['DejaVu_Sans_Condensed','Noto_Sans',sans-serif] text-[7px] leading-[9px] text-[#1c1c1c]">
      <div className="relative flex h-full flex-col overflow-hidden border-t-[3px] border-r border-l border-t-[#c3cede] border-r-[#8f8f8f] border-l-[#8f8f8f] bg-white px-[3px] pt-[3px] pb-px">
        <MenuBar />
        <div className="flex h-[33px] shrink-0 items-center gap-[11px] border-b-2 border-[#b8b8b8] bg-[#fcfcfc] pt-[3px] pl-[9px]">
          <ToolGroup glyphs={fileTools} className="w-[189px]" />
          <ToolGroup glyphs={dataTools} className="w-[148px]" />
          <ToolGroup glyphs={docTools} className="w-[129px]" />
          <ToolGroup glyphs={editTools} className="w-[53px]" />
          <ToolGroup glyphs={reportTools} className="w-[170px]" />
          <ToolGroup glyphs={helpTools} />
          <ToolGroup glyphs={addonTools} className="w-[34px]" />
        </div>
        <div className="flex min-h-0 flex-1">
          <SideTabs />
          <Sidebar />
          <Desktop />
        </div>
        <StatusBar />
        <PartnerWindow />
        <ServiceCallsWindow />
        <svg viewBox="0 0 12 18" className="pointer-events-none absolute top-[436px] left-[86px] h-[13px] w-[9px]" aria-hidden="true">
          <path d="M1 1v13l3-3 2.500 6 2.500-1-2.500-5.500H11z" fill="#fff" stroke="#222" />
        </svg>
      </div>
    </div>
  );
}
